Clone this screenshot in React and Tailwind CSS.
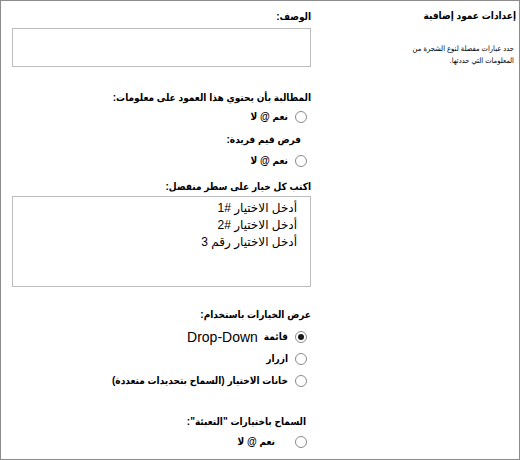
import React from "react";

const font = { fontFamily: '"Liberation Sans", "DejaVu Sans", sans-serif' };

function Radio({ checked }) {
  return (
    <span className="relative inline-flex h-[12px] w-[12px] shrink-0 items-center justify-center rounded-full border border-[#8a8a8a] bg-white">
      {checked && <span className="h-[6px] w-[6px] rounded-full bg-[#1a1a1a]" />}
    </span>
  );
}

function Label({ className = "", children }) {
  return (
    <div className={`h-[16px] whitespace-nowrap font-stretch-condensed text-[10px] font-bold leading-[16px] text-black ${className}`}>
      {children}
    </div>
  );
}

function RadioRow({ checked, className = "", gap = "gap-[7px]", children }) {
  return (
    <div className={`flex h-[18px] items-center pr-[4px] ${gap} ${className}`}>
      <Radio checked={checked} />
      <span className="whitespace-nowrap font-stretch-condensed text-[10px] font-bold leading-[18px] text-black">
        {children}
      </span>
    </div>
  );
}

export default function App() {
  return (
    <div
      dir="rtl"
      style={font}
      className="flex h-[460px] w-[520px] border border-[#8c8c8c] bg-white"
    >
      {/* side panel */}
      <div className="w-[208px] shrink-0 pr-[3px] text-black">
        <div className="mt-[7px] h-[16px] whitespace-nowrap font-stretch-condensed text-[10px] font-bold leading-[16px]">
          إعدادات عمود إضافية
        </div>
        <div className="mt-[19px] pr-[2px] whitespace-nowrap font-stretch-condensed text-[7.5px] leading-[12px]">
          حدد عبارات مفصلة لنوع الشجرة من
          <br />
          المعلومات التي حددتها.
        </div>
      </div>

      {/* form column */}
      <div className="flex w-[299px] shrink-0 flex-col">
        <Label className="mt-[8px]">الوصف:</Label>
        <div className="mt-[3px] h-[39px] w-full border border-[#bdbdbd] bg-white" />

        <Label className="mt-[23px]">المطالبة بأن يحتوي هذا العمود على معلومات:</Label>
        <RadioRow className="mt-[2px]">نعم @ لا</RadioRow>

        <Label className="mt-[6px] pr-[10px]">فرض قيم فريدة:</Label>
        <RadioRow className="mt-[4px]">نعم @ لا</RadioRow>

        <Label className="mt-[9px]">اكتب كل خيار على سطر منفصل:</Label>
        <div className="mt-[1px] h-[91px] w-full border border-[#bdbdbd] bg-white pr-[13px] pt-[3px] text-[12px] leading-[17px] text-black">
          <div>أدخل الاختيار #1</div>
          <div>أدخل الاختيار #2</div>
          <div>أدخل الاختيار رقم 3</div>
        </div>

        <Label className="mt-[20px]">عرض الخيارات باستخدام:</Label>
        <div className="mt-[5px] flex h-[18px] items-center pr-[4px]">
          <Radio checked />
          <span className="mr-[7px] whitespace-nowrap font-stretch-condensed text-[10px] font-bold leading-[18px]">قائمة</span>
          <span className="mr-[6px] whitespace-nowrap text-[14px] leading-[18px]">Drop-Down</span>
        </div>
        <RadioRow className="mt-[4px]">ازرار</RadioRow>
        <RadioRow className="mt-[4px]">خانات الاختيار (السماح بتحديدات متعددة)</RadioRow>

        <Label className="mt-[24px] pr-[5px]">السماح باختيارات "التعبئة":</Label>
        <RadioRow className="mt-[3px]" gap="gap-[20px]">نعم @ لا</RadioRow>
      </div>
    </div>
  );
}
